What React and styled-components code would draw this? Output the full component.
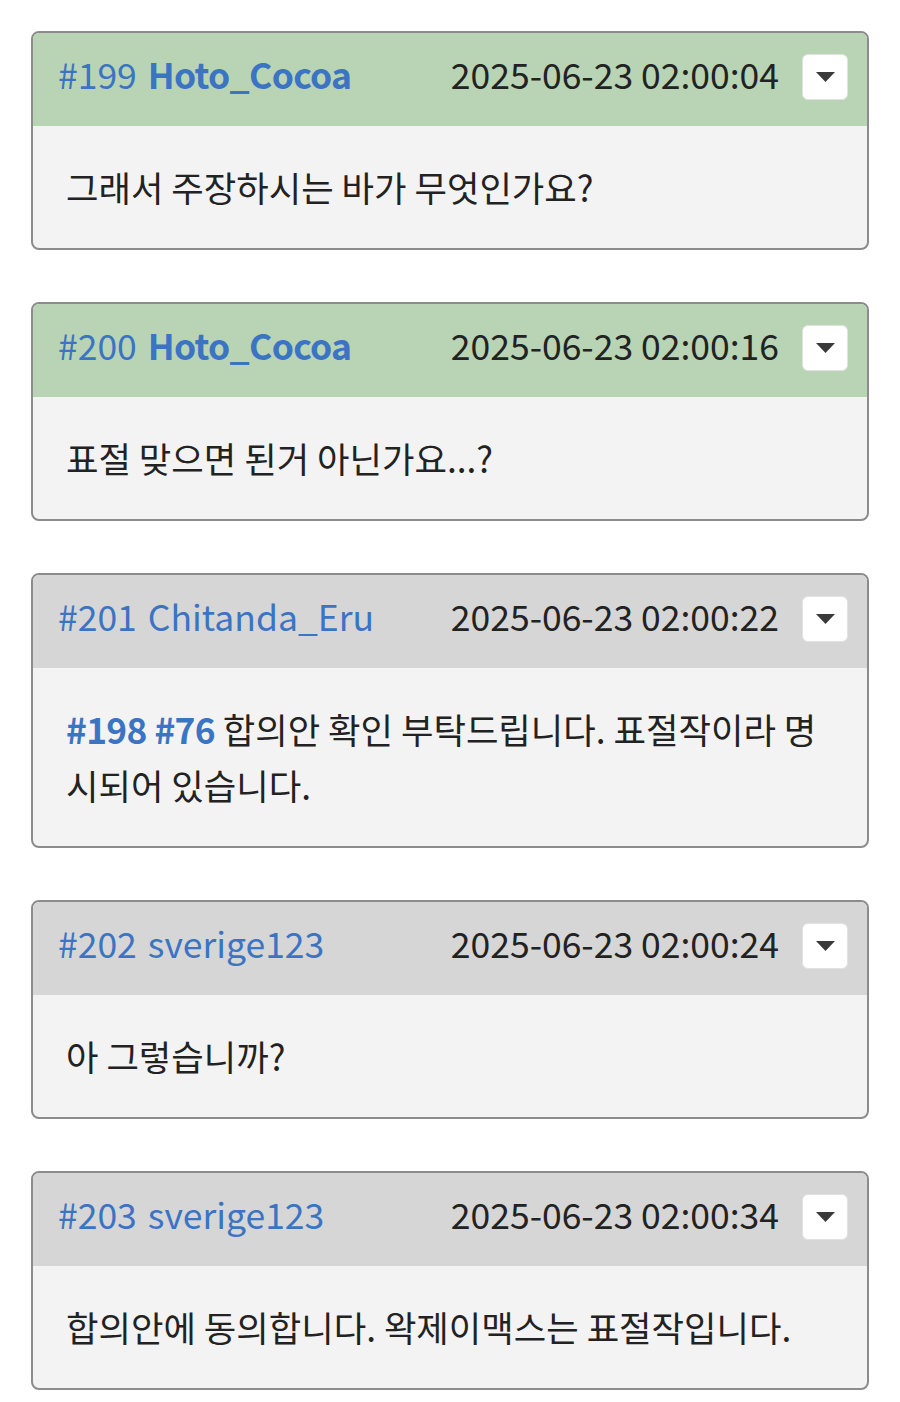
import styled, { createGlobalStyle } from 'styled-components';

const GlobalStyle = createGlobalStyle`
    body {
        margin: 0;
        background: #ffffff;
        font-family: "Noto Sans CJK KR", "Noto Sans", sans-serif;
    }
`;

const Thread = styled.div`
    display: flex;
    flex-direction: column;
    gap: 52px;
    padding: 31px 31px 14px;
`;

const Card = styled.div`
    border: 2px solid #8c8c8c;
    border-radius: 8px;
    overflow: hidden;
    background: #f3f3f3;
`;

const Header = styled.div`
    display: flex;
    align-items: center;
    height: 93px;
    box-sizing: border-box;
    padding: 0 19px 6px 25px;
    background: ${(p) => (p.$starter ? '#b8d4b4' : '#d6d6d6')};
    font-size: 35.5px;
`;

const Num = styled.span`
    color: #3b74c2;
    margin: 0 11px 6px 0;
`;

const Author = styled.span`
    color: #3b74c2;
    font-weight: ${(p) => (p.$starter ? 700 : 400)};
    letter-spacing: ${(p) => (p.$starter ? '-0.7px' : '0')};
    flex: 1;
    margin-bottom: 6px;
`;

const Time = styled.span`
    color: #222;
    margin: 0 23px 6px 0;
`;

const MenuButton = styled.button`
    display: flex;
    align-items: center;
    justify-content: center;
    width: 46px;
    height: 46px;
    padding: 0;
    background: #fff;
    border: 1px solid #e2e2e2;
    border-radius: 6px;
    cursor: pointer;
`;

const Body = styled.div`
    padding: 33px 33px;
    font-size: 35.3px;
    line-height: 56px;
    color: #222;
`;

const Anchor = styled.a`
    color: #3b74c2;
    font-weight: 700;
    letter-spacing: -0.7px;
    text-decoration: none;
`;

const comments = [
    { id: 199, author: 'Hoto_Cocoa', starter: true, time: '2025-06-23 02:00:04', text: '그래서 주장하시는 바가 무엇인가요?' },
    { id: 200, author: 'Hoto_Cocoa', starter: true, time: '2025-06-23 02:00:16', text: '표절 맞으면 된거 아닌가요...?' },
    { id: 201, author: 'Chitanda_Eru', time: '2025-06-23 02:00:22', refs: ['#198', '#76'], text: '합의안 확인 부탁드립니다. 표절작이라 명시되어 있습니다.' },
    { id: 202, author: 'sverige123', time: '2025-06-23 02:00:24', text: '아 그렇습니까?' },
    { id: 203, author: 'sverige123', time: '2025-06-23 02:00:34', text: '합의안에 동의합니다. 왁제이맥스는 표절작입니다.' },
];

function Caret() {
    return (
        <svg width="21" height="12" viewBox="0 0 21 12">
            <path d="M1 1 H20 L10.5 11 Z" fill="#3a3a3a" />
        </svg>
    );
}

export default function App() {
    return (
        <>
            <GlobalStyle />
            <Thread>
                {comments.map((c) => (
                    <Card key={c.id}>
                        <Header $starter={c.starter}>
                            <Num>#{c.id}</Num>
                            <Author $starter={c.starter}>{c.author}</Author>
                            <Time>{c.time}</Time>
                            <MenuButton>
                                <Caret />
                            </MenuButton>
                        </Header>
                        <Body>
                            {c.refs &&
                                c.refs.map((r) => (
                                    <span key={r}>
                                        <Anchor href={r}>{r}</Anchor>{' '}
                                    </span>
                                ))}
                            {c.text}
                        </Body>
                    </Card>
                ))}
            </Thread>
        </>
    );
}
